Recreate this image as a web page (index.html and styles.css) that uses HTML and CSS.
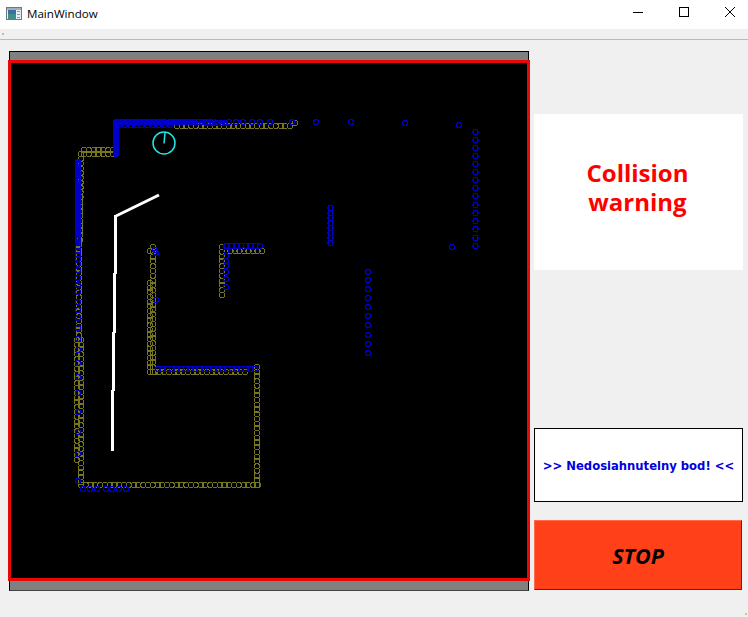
FILE: index.html
```html
<!DOCTYPE html>
<html>
<head>
<title>MainWindow</title>
<link rel="stylesheet" href="styles.css">
</head>
<body>
<div class="titlebar">
  <svg class="appicon" width="16" height="14" viewBox="0 0 16 14">
    <rect x="0.5" y="0.5" width="15" height="12" fill="#e8eef0" stroke="#6a7a80"/>
    <rect x="1" y="1" width="14" height="2" fill="#9fb0b8"/>
    <rect x="2" y="3" width="8" height="9" fill="#3f8f86"/>
    <rect x="2" y="3" width="8" height="4" fill="#3a6fa0"/>
    <rect x="11" y="4" width="3" height="1" fill="#8a98a0"/>
    <rect x="11" y="7" width="3" height="1" fill="#8a98a0"/>
    <rect x="11" y="10" width="3" height="1" fill="#8a98a0"/>
  </svg>
  <span class="title">MainWindow</span>
  <div class="controls">
    <svg width="46" height="29" viewBox="0 0 46 29"><path d="M18 12.5h10" stroke="#000" fill="none"/></svg>
    <svg width="46" height="29" viewBox="0 0 46 29"><rect x="18.5" y="7.5" width="9" height="9" stroke="#000" fill="none"/></svg>
    <svg width="46" height="29" viewBox="0 0 46 29"><path d="M18 7l10 10M28 7l-10 10" stroke="#000" fill="none"/></svg>
  </div>
</div>
<div class="toolbar"><span class="grip"></span></div>
<div class="main">
  <div class="scene">
    <div class="frame">
      <svg id="map" width="516" height="515" viewBox="11 63 516 515">
        <g id="yellow" fill="none" stroke="#76761e" stroke-width="1" shape-rendering="crispEdges"></g>
        <g id="blue" fill="none" stroke="#0000c8" stroke-width="1.3" shape-rendering="crispEdges"></g>
        <polyline points="159,195 116,216" fill="none" stroke="#fff" stroke-width="3"/>
        <path d="M115.500 215V274M114.500 273V333M113.500 332V391M112.500 390V451" fill="none" stroke="#fff" stroke-width="3"/>
        <circle cx="164" cy="143" r="11" fill="none" stroke="#20e8e8" stroke-width="1.5"/>
        <path d="M164 143.500L165 133" stroke="#20e8e8" stroke-width="1.5"/>
      </svg>
    </div>
  </div>
  <div class="side">
    <div class="warning">Collision<br>warning</div>
    <div class="message">&gt;&gt; Nedosiahnutelny bod! &lt;&lt;</div>
    <div class="stop">STOP</div>
  </div>
</div>
<div class="sizegrip"></div>
<script src="map.js"></script>
</body>
</html>
```

FILE: styles.css
```css
html, body { margin:0; padding:0; }
body { width:748px; height:617px; overflow:hidden; background:#f0f0f0; font-family:"Open Sans", "Noto Sans", sans-serif; position:relative; }

.titlebar { height:29px; background:#fff; display:flex; align-items:center; }
.appicon { margin:0 5px 2px 6px; }
.title { font-size:11.6px; color:#000; margin-bottom:2px; }
.controls { margin-left:auto; display:flex; margin-right:-5px; }
.controls svg { display:block; flex:none; }

.toolbar { height:10px; border-bottom:1px solid #b9b9b9; position:relative; }
.grip { position:absolute; left:2px; top:4px; width:2px; height:2px; background:#bbb; }

.main { display:flex; gap:5px; padding:11px 0 0 9px; }

.scene { width:518px; height:530px; background:#808080; border:1px solid #000; border-bottom-color:#444; padding-top:8px; }
.frame { width:516px; height:515px; border:3px solid #e80808; background:#000; margin-left:-2px; }
.frame svg { display:block; }

.side { width:209px; height:540px; padding-top:63px; box-sizing:border-box; display:flex; flex-direction:column; }
.warning { height:156px; box-sizing:border-box; padding:0 2px 10px 0; background:#fff; color:#ff0000; font-size:24px; font-weight:bold; line-height:29px; display:flex; align-items:center; justify-content:center; text-align:center; }
.message { margin-top:158px; height:74px; box-sizing:border-box; padding-top:2px; background:#fff; border:1px solid #000; color:#0000e0; font-family:"DejaVu Sans", sans-serif; font-size:11.6px; font-weight:bold; display:flex; align-items:center; justify-content:center; white-space:nowrap; }
.stop { margin-top:18px; width:208px; height:70px; box-sizing:border-box; background:#ff4019; border-top:1px solid #ff6a4a; border-left:1px solid #ff6a4a; border-right:1px solid #6e2010; border-bottom:1px solid #6e2010; color:#000; font-size:21.500px; font-weight:bold; font-style:italic; display:flex; align-items:center; justify-content:center; }

.sizegrip { position:absolute; right:1px; bottom:2px; width:2px; height:2px; background:#c4c4c4; }
```

FILE: map.js
```js
// lidar points, page coords
var NS = "http://www.w3.org/2000/svg";

function dot(group, x, y) {
  var c = document.createElementNS(NS, "circle");
  c.setAttribute("cx", x);
  c.setAttribute("cy", y);
  c.setAttribute("r", 2.6);
  group.appendChild(c);
}

function line(group, x1, y1, x2, y2, step) {
  var len = Math.sqrt((x2 - x1) * (x2 - x1) + (y2 - y1) * (y2 - y1));
  var n = Math.round(len / step);
  for (var i = 0; i <= n; i++) {
    dot(group, x1 + (x2 - x1) * i / n, y1 + (y2 - y1) * i / n);
  }
}

var y = document.getElementById("yellow");
var b = document.getElementById("blue");

// outer wall
line(y, 177, 126, 290, 126, 4.8);
dot(y, 295, 123);
line(y, 84, 150, 113, 150, 4.8);
line(y, 84, 154, 113, 154, 4.8);
line(y, 81, 154, 80, 240, 4.8);
line(y, 79, 240, 79, 340, 4.8);
line(y, 77, 340, 77, 460, 4.8);
line(y, 81, 340, 81, 482, 4.8);
line(y, 81, 485, 258, 485, 4.8);
line(y, 257, 367, 257, 485, 4.8);

// inner L
line(y, 153, 247, 153, 372, 4.8);
line(y, 150, 283, 150, 372, 4.8);
dot(y, 150, 251);
line(y, 150, 372, 245, 372, 4.8);
line(y, 222, 247, 222, 295, 4.8);
line(y, 226, 251, 262, 251, 4.8);

// blue along top
line(b, 116, 122, 165, 122, 1.5);
line(b, 170, 122, 195, 122, 1.5);
line(b, 195, 122, 225, 123, 3.5);
[229, 236, 243, 252, 260, 270, 292].forEach(function (x) { dot(b, x, 122); });
line(b, 116, 122, 116, 154, 1.5);
line(b, 119, 125, 170, 125, 6);

// blue left wall
line(b, 78, 162, 78, 240, 1.6);
[242, 247, 251, 255, 259, 264, 270, 278, 285, 292, 302, 310, 318, 328, 339, 350, 363, 377, 393, 412, 432, 454, 481].forEach(function (v) {
  dot(b, 78, v);
});
[83, 90, 97, 106, 112, 119, 126].forEach(function (x) { dot(b, x, 489); });

// blue inner
dot(b, 155, 250);
dot(b, 156, 253);
dot(b, 156, 300);
line(b, 158, 369, 255, 369, 4.6);
line(b, 227, 246, 260, 246, 4.4);
[246, 251, 256, 261, 266, 272, 279, 287].forEach(function (v) { dot(b, 226, v); });

// blue free points
dot(b, 316, 122);
dot(b, 351, 122);
dot(b, 405, 123);
dot(b, 459, 125);
dot(b, 452, 247);
[132, 140, 148, 156, 164, 172, 180, 188, 196, 205, 213, 221, 229, 238, 246].forEach(function (v) {
  dot(b, 475.5, v);
});
[208, 213, 218, 223, 228, 233, 238, 243].forEach(function (v) { dot(b, 330.5, v); });
[272, 280, 289, 298, 307, 316, 325, 335, 344, 353].forEach(function (v) { dot(b, 368, v); });
```
